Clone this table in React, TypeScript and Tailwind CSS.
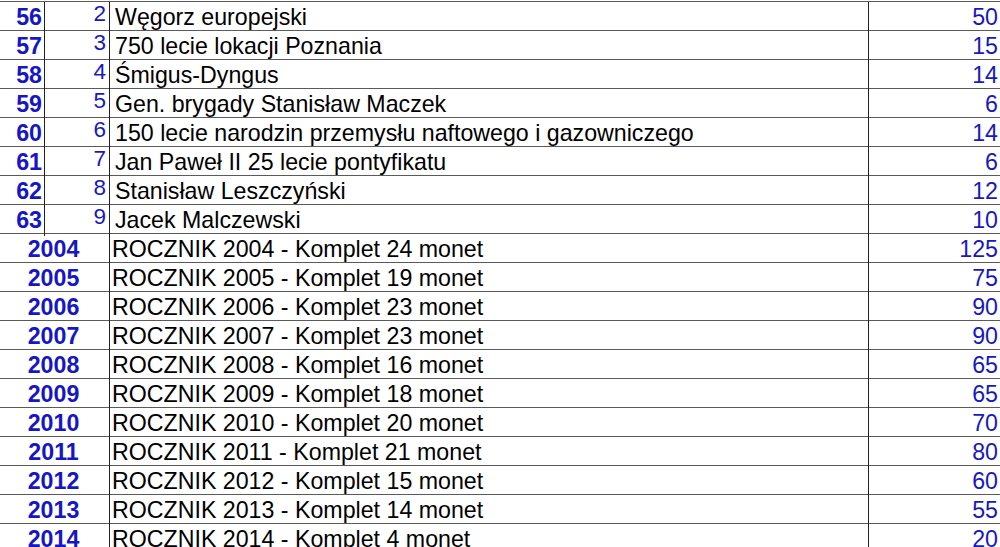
import React from "react";

const top = [
  [56, 2, "Węgorz europejski", 50],
  [57, 3, "750 lecie lokacji Poznania", 15],
  [58, 4, "Śmigus-Dyngus", 14],
  [59, 5, "Gen. brygady Stanisław Maczek", 6],
  [60, 6, "150 lecie narodzin przemysłu naftowego i gazowniczego", 14],
  [61, 7, "Jan Paweł II 25 lecie pontyfikatu", 6],
  [62, 8, "Stanisław Leszczyński", 12],
  [63, 9, "Jacek Malczewski", 10],
] as const;

const years = [
  [2004, 24, 125],
  [2005, 19, 75],
  [2006, 23, 90],
  [2007, 23, 90],
  [2008, 16, 65],
  [2009, 18, 65],
  [2010, 20, 70],
  [2011, 21, 80],
  [2012, 15, 60],
  [2013, 14, 55],
  [2014, 4, 20],
] as const;

const font = { fontFamily: '"Liberation Sans", Arial, sans-serif' };

export default function App() {
  return (
    <div
      className="w-[1000px] h-[547px] overflow-hidden bg-white pt-[1px]"
      style={font}
    >
      <div className="border-t border-[#5a5a5a]">
        {top.map(([a, b, t, v]) => (
          <div
            key={a}
            className="grid grid-cols-[45px_65px_759px_1fr] h-[29px] border-b border-[#5a5a5a] text-[23.2px]"
          >
            <div className="border-r border-[#222] text-right pr-[2px] font-bold text-[#1616c4] leading-[31px]">
              {a}
            </div>
            <div className="border-r border-[#222] text-right pr-[3px] text-[22.5px] text-[#1818bf] leading-[24px]">
              {b}
            </div>
            <div className="border-r border-[#222] pl-[5px] text-black leading-[31px] whitespace-nowrap">
              {t}
            </div>
            <div className="text-right pr-[2px] text-[#1818bf] leading-[31px]">
              {v}
            </div>
          </div>
        ))}
        {years.map(([y, n, v]) => (
          <div
            key={y}
            className="grid grid-cols-[110px_759px_1fr] h-[29px] border-b border-[#5a5a5a] text-[23.2px]"
          >
            <div className="border-r border-[#222] text-center pr-[2px] font-bold text-[#1616c4] leading-[31px]">
              {y}
            </div>
            <div className="border-r border-[#222] pl-[2px] text-black leading-[31px] whitespace-nowrap">
              ROCZNIK {y} - Komplet {n} monet
            </div>
            <div className="text-right pr-[2px] text-[#1818bf] leading-[31px]">
              {v}
            </div>
          </div>
        ))}
      </div>
    </div>
  );
}
